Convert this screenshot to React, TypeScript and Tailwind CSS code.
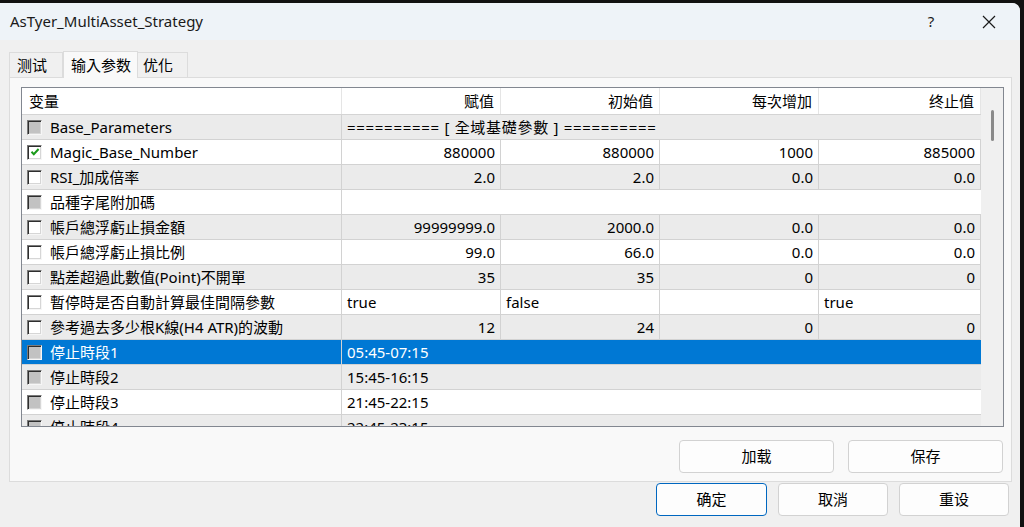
import React from 'react';

type Box = 'gray' | 'checked' | 'empty';

interface Row {
  name: string;
  box: Box;
  span?: string;
  cells?: { text: string; left?: boolean }[];
}

const R = (t: string) => ({ text: t });
const L = (t: string) => ({ text: t, left: true });

const ROWS: Row[] = [
  { name: 'Base_Parameters', box: 'gray', span: '========== [ 全域基礎參數 ] ==========' },
  { name: 'Magic_Base_Number', box: 'checked', cells: [R('880000'), R('880000'), R('1000'), R('885000')] },
  { name: 'RSI_加成倍率', box: 'empty', cells: [R('2.0'), R('2.0'), R('0.0'), R('0.0')] },
  { name: '品種字尾附加碼', box: 'gray', span: '' },
  { name: '帳戶總浮虧止損金額', box: 'empty', cells: [R('99999999.0'), R('2000.0'), R('0.0'), R('0.0')] },
  { name: '帳戶總浮虧止損比例', box: 'empty', cells: [R('99.0'), R('66.0'), R('0.0'), R('0.0')] },
  { name: '點差超過此數值(Point)不開單', box: 'empty', cells: [R('35'), R('35'), R('0'), R('0')] },
  { name: '暫停時是否自動計算最佳間隔參數', box: 'empty', cells: [L('true'), L('false'), L(''), L('true')] },
  { name: '參考過去多少根K線(H4 ATR)的波動', box: 'empty', cells: [R('12'), R('24'), R('0'), R('0')] },
  { name: '停止時段1', box: 'gray', span: '05:45-07:15' },
  { name: '停止時段2', box: 'gray', span: '15:45-16:15' },
  { name: '停止時段3', box: 'gray', span: '21:45-22:15' },
  { name: '停止時段4', box: 'gray', span: '22:45-23:15' },
];

const SELECTED = 9;
const COLS = ['w-[159px]', 'w-[159px]', 'w-[159px]', 'w-[162px]'];

function CheckBox({ kind }: { kind: Box }) {
  return (
    <div
      className={`w-[15px] h-[15px] shrink-0 border border-t-[#7a7a7a] border-l-[#7a7a7a] border-r-[#f6f6f6] border-b-[#f6f6f6] shadow-[inset_1px_1px_0_#2e2e2e,inset_-1px_-1px_0_#d6d6d6] flex items-center justify-center ${
        kind === 'gray' ? 'bg-[#c2c2c2]' : 'bg-white'
      }`}
    >
      {kind === 'checked' && (
        <svg width="10" height="10" viewBox="0 0 10 10">
          <path d="M1.5 4.8 L3.8 7.2 L8.6 2" fill="none" stroke="#1a9a1a" strokeWidth="2" />
        </svg>
      )}
    </div>
  );
}

function Btn({ label, className = '', primary = false }: { label: string; className?: string; primary?: boolean }) {
  return (
    <div
      className={`h-[33px] rounded-[4px] bg-[#fdfdfd] border flex items-center justify-center text-[15px] text-black ${
        primary ? 'border-[#0067c0]' : 'border-[#d2d2d2]'
      } ${className}`}
    >
      {label}
    </div>
  );
}

export default function App() {
  return (
    <div
      className="w-[1024px] h-[527px] bg-[#111] flex items-start overflow-hidden"
      style={{ fontFamily: '"Noto Sans", "Noto Sans CJK TC", "Noto Sans CJK SC", sans-serif' }}
    >
      <div className="mt-[3px] w-[1020px] h-[524px] bg-[#f0f0f0] rounded-tr-[8px] flex flex-col">
        {/* title bar */}
        <div className="h-[37px] shrink-0 bg-[#eef3f8] rounded-tr-[8px] flex items-center pl-[10px] text-[15px] text-[#1a1a1a]">
          <span className="flex-1">AsTyer_MultiAsset_Strategy</span>
          <span className="w-[20px] text-center mr-[41px]">?</span>
          <svg width="14" height="14" viewBox="0 0 14 14" className="mr-[24px]">
            <path d="M1 1 L13 13 M13 1 L1 13" stroke="#1a1a1a" strokeWidth="1.2" />
          </svg>
        </div>

        <div className="pt-[10px] pl-[9px] flex flex-col">
          {/* tabs */}
          <div className="h-[27px] flex items-end text-[15px] text-black">
            <div className="h-[25px] w-[54px] border border-b-0 border-[#dcdcdc] bg-[#f0f0f0] flex items-center pl-[7px]">测试</div>
            <div className="h-[27px] w-[75px] border border-b-0 border-[#dcdcdc] bg-[#f9f9f9] flex items-center pl-[7px] -mb-px relative z-10">输入参数</div>
            <div className="h-[25px] w-[50px] border border-b-0 border-l-0 border-[#dcdcdc] bg-[#f0f0f0] flex items-center pl-[5px]">优化</div>
          </div>

          {/* panel */}
          <div className="w-[1003px] h-[405px] border border-[#dcdcdc] bg-[#f9f9f9] pt-[9px] pl-[11px] pr-[8px] flex flex-col">
            <div className="w-[983px] h-[340px] border border-[#828790] bg-white flex overflow-hidden text-[15px]">
              <div className="w-[959px] flex flex-col">
                {/* header */}
                <div className="h-[27px] shrink-0 flex border-b border-[#d4d4d4] bg-white text-black">
                  <div className="w-[320px] border-r border-[#e5e5e5] pl-[7px] flex items-center">变量</div>
                  {['赋值', '初始值', '每次增加', '终止值'].map((h, i) => (
                    <div key={h} className={`${COLS[i]} border-r border-[#e5e5e5] pr-[6px] flex items-center justify-end`}>
                      {h}
                    </div>
                  ))}
                </div>
                {ROWS.map((row, idx) => {
                  const sel = idx === SELECTED;
                  const bg = sel ? 'bg-[#0078d4] text-white' : idx % 2 === 0 ? 'bg-[#ebebeb] text-black' : 'bg-white text-black';
                  return (
                    <div key={row.name} className={`h-[25px] shrink-0 flex border-b border-[#d2d2d2] ${bg}`}>
                      <div className="w-[320px] border-r border-[#d2d2d2] flex items-center pl-[5px] gap-[8px]">
                        <CheckBox kind={row.box} />
                        <span className="whitespace-nowrap">{row.name}</span>
                      </div>
                      {row.span !== undefined ? (
                        <div className={`flex-1 flex items-center pl-[5px] whitespace-nowrap ${idx === 0 ? 'tracking-[0.7px]' : ''}`}>
                          {row.span}
                        </div>
                      ) : (
                        row.cells!.map((c, i) => (
                          <div
                            key={i}
                            className={`${COLS[i]} border-r border-[#d2d2d2] flex items-center whitespace-nowrap ${
                              c.left ? 'pl-[5px]' : 'justify-end pr-[5px]'
                            }`}
                          >
                            {c.text}
                          </div>
                        ))
                      )}
                    </div>
                  );
                })}
              </div>
              {/* scrollbar */}
              <div className="w-[22px] bg-[#f0f0f0] flex justify-center pt-[22px]">
                <div className="w-[3px] h-[31px] rounded-full bg-[#8a8a8a] ml-[1px]" />
              </div>
            </div>

            <div className="flex justify-end gap-[14px] mt-[13px]">
              <Btn label="加载" className="w-[155px]" />
              <Btn label="保存" className="w-[155px]" />
            </div>
          </div>
        </div>

        {/* bottom buttons */}
        <div className="flex justify-end gap-[11px] pr-[11px] mt-[1px]">
          <Btn label="确定" className="w-[111px]" primary />
          <Btn label="取消" className="w-[110px]" />
          <Btn label="重设" className="w-[110px]" />
        </div>
      </div>
    </div>
  );
}
